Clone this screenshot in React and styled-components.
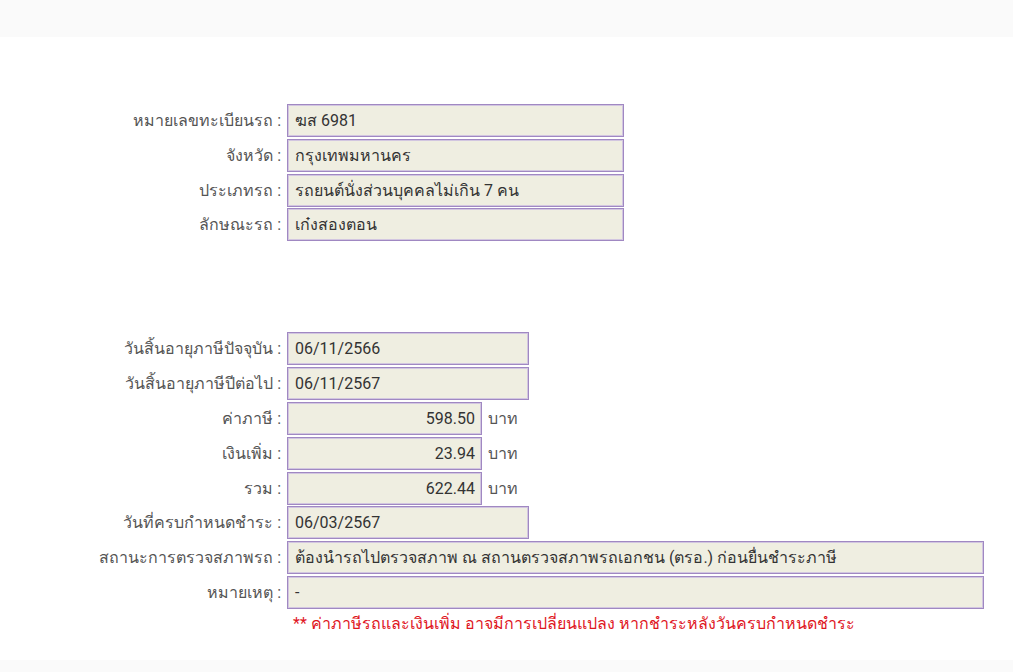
import styled, { createGlobalStyle } from "styled-components";

const GlobalStyle = createGlobalStyle`
  html, body {
    margin: 0;
    padding: 0;
    background: #ffffff;
  }
  body {
    font-family: Roboto, "Noto Sans", "DejaVu Sans", sans-serif;
  }
`;

const vehicle = [
  { label: "หมายเลขทะเบียนรถ", value: "ฆส 6981" },
  { label: "จังหวัด", value: "กรุงเทพมหานคร" },
  { label: "ประเภทรถ", value: "รถยนต์นั่งส่วนบุคคลไม่เกิน 7 คน" },
  { label: "ลักษณะรถ", value: "เก๋งสองตอน" },
];

const tax = [
  { label: "วันสิ้นอายุภาษีปัจจุบัน", value: "06/11/2566", size: "date" },
  { label: "วันสิ้นอายุภาษีปีต่อไป", value: "06/11/2567", size: "date" },
  { label: "ค่าภาษี", value: "598.50", size: "money", unit: "บาท" },
  { label: "เงินเพิ่ม", value: "23.94", size: "money", unit: "บาท" },
  { label: "รวม", value: "622.44", size: "money", unit: "บาท" },
  { label: "วันที่ครบกำหนดชำระ", value: "06/03/2567", size: "date" },
  {
    label: "สถานะการตรวจสภาพรถ",
    value: "ต้องนำรถไปตรวจสภาพ ณ สถานตรวจสภาพรถเอกชน (ตรอ.) ก่อนยื่นชำระภาษี",
    size: "long",
  },
  { label: "หมายเหตุ", value: "-", size: "long" },
];

const WIDTHS = { normal: 337, date: 242, money: 195, long: 697 };

function FieldRow({ label, value, size = "normal", unit }) {
  return (
    <Row>
      <Label>{label} :</Label>
      <Field $width={WIDTHS[size]} $align={size === "money" ? "right" : "left"}>
        {value}
      </Field>
      {unit && <Unit>{unit}</Unit>}
    </Row>
  );
}

export default function App() {
  return (
    <>
      <GlobalStyle />
      <Page>
        <TopBar />
        <Content>
          <Section>
            {vehicle.map((r) => (
              <FieldRow key={r.label} {...r} />
            ))}
          </Section>
          <Section $gap={91}>
            {tax.map((r) => (
              <FieldRow key={r.label} {...r} />
            ))}
            <Note>** ค่าภาษีรถและเงินเพิ่ม อาจมีการเปลี่ยนแปลง หากชำระหลังวันครบกำหนดชำระ</Note>
          </Section>
        </Content>
        <BottomBar />
      </Page>
    </>
  );
}

const Page = styled.div`
  width: 1013px;
  height: 672px;
  display: flex;
  flex-direction: column;
  overflow: hidden;
`;

const TopBar = styled.div`
  height: 37px;
  background: #fafafa;
  flex-shrink: 0;
`;

const BottomBar = styled.div`
  height: 12px;
  flex-shrink: 0;
  background: #fafafa;
`;

const Content = styled.div`
  flex: 1;
  padding-top: 67px;
  box-sizing: border-box;
`;

const Section = styled.div`
  display: flex;
  flex-direction: column;
  gap: 1.8px;
  margin-top: ${(p) => p.$gap || 0}px;
`;

const Row = styled.div`
  display: flex;
  align-items: center;
  height: 33px;
`;

const Label = styled.div`
  width: 281px;
  padding-right: 6px;
  text-align: right;
  font-size: 16px;
  color: #555555;
  white-space: nowrap;
  flex-shrink: 0;
`;

const Field = styled.div`
  box-sizing: border-box;
  width: ${(p) => p.$width}px;
  height: 33px;
  display: flex;
  align-items: center;
  justify-content: ${(p) => (p.$align === "right" ? "flex-end" : "flex-start")};
  padding: 0 6px 0 7px;
  background: #efeee1;
  border: 1px solid #a088c2;
  box-shadow: inset 0 0 0 1px #d2c6e0;
  font-size: 16px;
  color: #333333;
  white-space: nowrap;
`;

const Unit = styled.span`
  margin-left: 6px;
  font-size: 16px;
  color: #555555;
`;

const Note = styled.div`
  margin: 0 0 0 293px;
  font-size: 16px;
  line-height: 26px;
  color: #e0161e;
`;
